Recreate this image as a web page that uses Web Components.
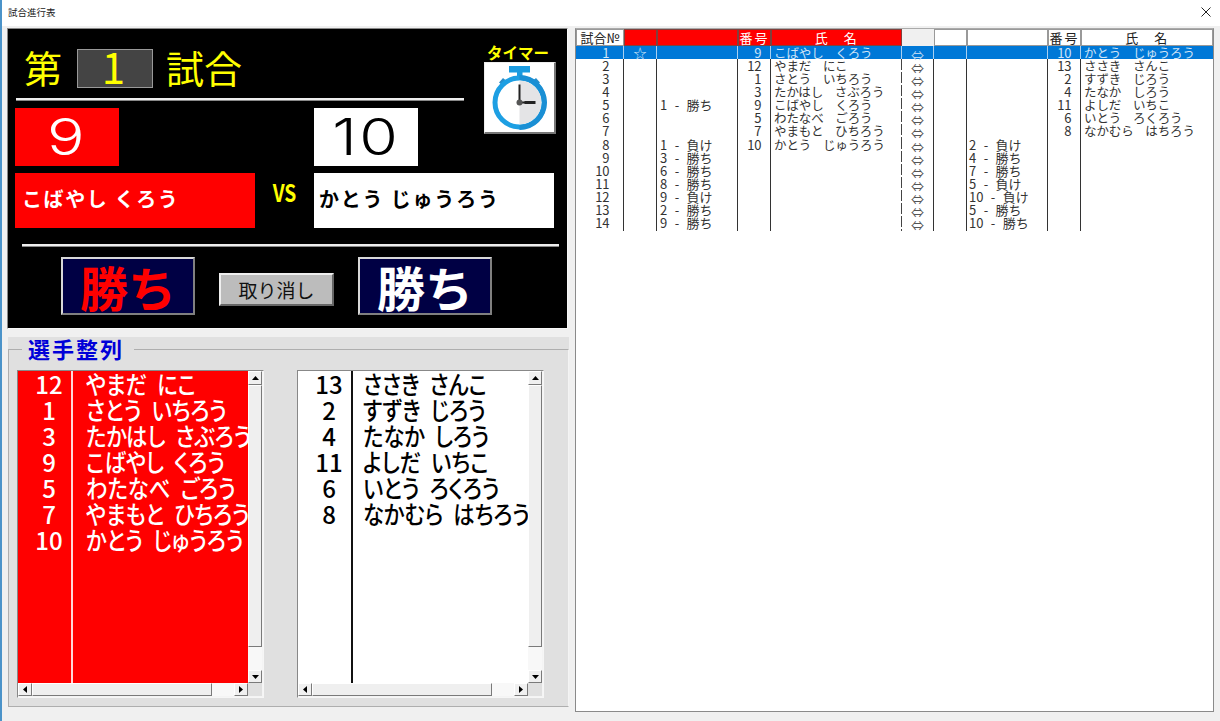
<!DOCTYPE html>
<html lang="ja"><head><meta charset="utf-8"><title>試合進行表</title>
<style>
html,body{margin:0;padding:0;background:#f0f0f0}
body{font-family:"Noto Sans CJK JP","Noto Sans",sans-serif;width:1220px;height:721px;overflow:hidden}
</style></head><body>
<app-window>
  <span slot="title">試合進行表</span>
  <score-board slot="left"></score-board>
  <sort-panel slot="left" heading="選手整列">
    <scroll-list tone="red" rows="12|やまだ にこ;1|さとう いちろう;3|たかはし さぶろう;9|こばやし くろう;5|わたなべ ごろう;7|やまもと ひちろう;10|かとう じゅうろう"></scroll-list>
    <scroll-list tone="white" rows="13|ささき さんこ;2|すずき じろう;4|たなか しろう;11|よしだ いちこ;6|いとう ろくろう;8|なかむら はちろう"></scroll-list>
  </sort-panel>
  <match-grid slot="right"></match-grid>
</app-window>
<script>
const JP='"Noto Sans CJK JP","Noto Sans",sans-serif';
function def(name,css,html){
  customElements.define(name,class extends HTMLElement{
    constructor(){super();const r=this.attachShadow({mode:'open'});r.innerHTML=`<style>${css}</style>${typeof html==='function'?html(this):html}`;}
    connectedCallback(){
      if(typeof html==='function'){ this.shadowRoot.innerHTML=`<style>${css}</style>${html(this)}`; }
    }
  });
}
def('app-window',`
:host{display:flex;flex-direction:column;width:1220px;height:721px;box-sizing:border-box;border-left:2px solid #4b93c9;background:#f0f0f0;font-family:${JP}}
.bar{flex:none;height:26px;background:#fff;display:flex;align-items:center;justify-content:space-between;padding:0 9px 2px 6px;box-sizing:border-box;font-size:9.5px;color:#222}
.bar svg{display:block}
.main{display:flex;flex:1;min-height:0;padding:2px 6px 0 5px;gap:6px;align-items:flex-start}
.left{display:flex;flex-direction:column;gap:8px;width:562px;flex:none}
`,`<div class="bar"><slot name="title"></slot><svg width="10" height="10" viewBox="0 0 10 10"><path d="M.5.5l9 9M9.5.5l-9 9" stroke="#222" stroke-width="1" fill="none"/></svg></div>
<div class="main"><div class="left"><slot name="left"></slot></div><slot name="right"></slot></div>`);

def('win-button',`
:host{display:flex;align-items:center;justify-content:center;box-sizing:border-box;width:134px;height:58px;background:#000044;border:2px solid;border-color:#d8d8d8 #808080 #808080 #d8d8d8;font-weight:700;font-size:48px;line-height:1;color:var(--fg,#fff);letter-spacing:0}
:host([plain]){width:115px;height:33px;background:#bcbcbc;border-color:#efefef #666 #666 #efefef;font-weight:400;font-size:19px;color:#111;margin-top:16px}
`,`<slot></slot>`);

def('stop-watch',`
:host{display:block;box-sizing:border-box;width:72px;height:72px;background:#fff;border:1px solid #eee;border-right:2px solid #777;border-bottom:2px solid #777}
svg{display:block}
`,`<svg width="69" height="69" viewBox="0 0 69 69">
<rect x="24" y="3" width="21" height="6.5" fill="#1a9be0"/><rect x="32" y="9" width="5.5" height="6" fill="#1a9be0"/>
<path d="M14 19.5l4-4.5 6 5-4 4.5zM55 19.5l-4-4.5-6 5 4 4.5z" fill="#2b8ec9"/>
<g transform="translate(-.5 -1.5)">
<circle cx="35" cy="41" r="24.5" fill="#fff" stroke="#1d9fe3" stroke-width="5"/>
<path d="M35 19a22 22 0 0 1 0 44z" fill="#e4e4e6"/>
<path d="M35 13.5a27 27 0 0 1 0 55v-5a22 22 0 0 0 0-45z" fill="#1a8fd4"/>
<path d="M35 23v18h15" fill="none" stroke="#222" stroke-width="2"/>
<path d="M40 41h11" fill="none" stroke="#222" stroke-width="3"/>
<circle cx="35" cy="41" r="3" fill="#555"/></g></svg>`);

def('score-board',`
:host{display:block;box-sizing:border-box;width:561px;height:301px;background:#000;border:1px solid;border-color:#888 #f8f8f8 #f8f8f8 #888;color:#fff}
.top{display:flex;height:144px}
.tl{width:476px;flex:none}
.title{display:flex;align-items:center;height:39px;margin:20px 0 0 16px;color:#ff0;font-size:38px;line-height:1;gap:15px}
.title span{padding-bottom:4px}
.title span:last-child{margin-left:-2px}
.title b{display:flex;align-items:center;justify-content:center;box-sizing:border-box;width:76px;height:39px;background:#444;border:1px solid #999;font-weight:400;font-size:42px;padding:0 3px 5px 0}
.rule{height:3px;background:#eee;border-bottom:1px solid #888;box-sizing:border-box}
.r1{width:448px;margin:10px 0 0 8px}
.nums{display:flex;gap:195px;margin:7px 0 0 7px}
.num{width:104px;height:58px;display:flex;align-items:center;justify-content:center;font-family:Inter,"Liberation Sans",sans-serif;font-weight:300;font-size:50px;line-height:1}
.num span{display:inline-block;transform:scaleX(1.25);letter-spacing:2px}
.red{background:#f00;color:#fff}.wht{background:#fff;color:#000}
.timer{display:flex;flex-direction:column;margin:13px 0 0 0;align-items:flex-start}
.timer span{color:#ff0;font-weight:700;font-size:15.5px;line-height:20px;margin-left:3px;white-space:nowrap}
.names{display:flex;align-items:center;margin:0 0 0 7px}
.name{width:240px;height:55px;display:flex;align-items:center;box-sizing:border-box;padding:0 0 4px 7px;font-weight:700;font-size:20px;letter-spacing:1.6px;white-space:nowrap}
.vs{width:59px;text-align:center;color:#ff0;font-weight:700;font-size:24px;line-height:1;margin-top:-17px;transform:scaleX(.8)}
.r2{width:537px;margin:16px 0 0 14px}
.btns{display:flex;align-items:flex-start;margin:10px 0 0 53px;gap:24px}
`,`<div class="top"><div class="tl">
<div class="title"><span>第</span><b>1</b><span>試合</span></div>
<div class="rule r1"></div>
<div class="nums"><div class="num red"><span>9</span></div><div class="num wht"><span>10</span></div></div>
</div><div class="timer"><span>タイマー</span><stop-watch></stop-watch></div></div>
<div class="names"><div class="name red">こばやし くろう</div><div class="vs">VS</div><div class="name wht" style="padding-left:5px;letter-spacing:1.8px">かとう じゅうろう</div></div>
<div class="rule r2"></div>
<div class="btns"><win-button style="--fg:#f00">勝ち</win-button><win-button plain>取り消し</win-button><win-button>勝ち</win-button></div>`);

def('sort-panel',`
:host{display:block;box-sizing:border-box;width:561px;height:370px;margin-left:1px;background:#e0e0e0}
fieldset{margin:0;padding:9px 0 0 8px;height:100%;box-sizing:border-box;border:1px solid #aeaeae;border-right-color:#f4f4f4;display:block}
legend{margin-left:5px;padding:0 10px 2px 6px;color:#0000d8;font-weight:700;font-size:22px;line-height:22px;letter-spacing:2px;white-space:nowrap}
.lists{display:flex;gap:33px}
`,s=>`<fieldset><legend>${s.getAttribute('heading')||''}</legend><div class="lists"><slot></slot></div></fieldset>`);

def('win-arrow',`
:host{display:flex;align-items:center;justify-content:center;box-sizing:border-box;width:14px;height:14px;background:#f0f0f0;border:1px solid;border-color:#fff #7a7a7a #7a7a7a #fff;flex:none}
svg{display:block}
`,s=>{const k=s.getAttribute('dir')||'u';const d={u:'M0 4L3.5 0 7 4z',d:'M0 0L7 0 3.5 4z',l:'M4 0V7L0 3.5z',r:'M0 0V7L4 3.5z'}[k];const v='ud'.includes(k);return `<svg width="${v?7:4}" height="${v?4:7}" viewBox="0 0 ${v?7:4} ${v?4:7}"><path d="${d}" fill="#000"/></svg>`});

def('win-scroll',`
:host{display:flex;background:#f8f8f8;box-sizing:border-box}
:host([v]){flex-direction:column;width:14px;height:312px}
:host([h]){flex-direction:row;width:230px;height:13px}
.thumb{background:#efefef;box-sizing:border-box;border:1px solid;border-color:#fff #7a7a7a #7a7a7a #fff}
:host([v]) .thumb{height:262px}
:host([h]) .thumb{width:180px}
.sp{flex:1}
:host([h]) win-arrow{height:13px}
`,s=>s.hasAttribute('v')?`<win-arrow dir="u"></win-arrow><div class="thumb"></div><div class="sp"></div><win-arrow dir="d" style="height:13px"></win-arrow>`:`<win-arrow dir="l"></win-arrow><div class="thumb"></div><div class="sp"></div><win-arrow dir="r"></win-arrow>`);

def('scroll-list',`
:host{display:block;box-sizing:border-box;width:247px;height:328px;background:#f4f4f4;border:1px solid;border-color:#888 #f6f6f6 #f6f6f6 #888;--bg:#fff;--fg:#000;--div:#111;--pad:10px}
:host([tone=red]){--bg:#f00;--fg:#fff;--div:#ffd8d8;--pad:13px}
.g{display:grid;grid-template-columns:230px 14px;grid-template-rows:312px 13px}
.c{background:var(--bg);color:var(--fg);overflow:hidden}
.r{display:grid;grid-template-columns:53px 2px 1fr;height:26px;line-height:25px;font-size:24px;white-space:nowrap}
.n{text-align:center;font-weight:500;padding-left:9px;box-sizing:border-box}
.d{background:var(--div);height:26px}
.t{padding-left:var(--pad);overflow:hidden;height:26px}
.t span{display:inline-block;transform:scaleX(.87);transform-origin:0 50%;font-weight:500;font-feature-settings:"palt";font-size:24.5px;word-spacing:6px}
.corner{background:#e0e0e0}
`,s=>{const rows=(s.getAttribute('rows')||'').split(';').map(x=>x.split('|'));
 while(rows.length<12)rows.push(['','']);
 return `<div class="g"><div class="c">${rows.map(([n,t])=>`<div class="r"><div class="n">${n}</div><div class="d"></div><div class="t"><span>${t}</span></div></div>`).join('')}</div><win-scroll v></win-scroll><win-scroll h></win-scroll><div class="corner"></div></div>`});

const T='48px 33px 81px 33px 131px 32px 33px 81px 33px 1fr';
const D=[
['1','☆','','9','こばやし くろう','','','10','かとう じゅうろう'],
['2','','','12','やまだ にこ','','','13','ささき さんこ'],
['3','','','1','さとう いちろう','','','2','すずき じろう'],
['4','','','3','たかはし さぶろう','','','4','たなか しろう'],
['5','','1 - 勝ち','9','こばやし くろう','','','11','よしだ いちこ'],
['6','','','5','わたなべ ごろう','','','6','いとう ろくろう'],
['7','','','7','やまもと ひちろう','','','8','なかむら はちろう'],
['8','','1 - 負け','10','かとう じゅうろう','','2 - 負け','',''],
['9','','3 - 勝ち','','','','4 - 勝ち','',''],
['10','','6 - 勝ち','','','','7 - 勝ち','',''],
['11','','8 - 勝ち','','','','5 - 負け','',''],
['12','','9 - 負け','','','','10 - 負け','',''],
['13','','2 - 勝ち','','','','5 - 勝ち','',''],
['14','','9 - 勝ち','','','','10 - 勝ち','','']];
def('match-grid',`
:host{display:block;box-sizing:border-box;width:639px;height:684px;background:#fff;border:1px solid #8a8a8a;border-top-color:#aaa;font-size:13px;color:#333}
.h,.r{display:grid;grid-template-columns:${T}}
.h{height:17px;line-height:15px;text-align:center;background:#f0f0f0;color:#222}
.h>div{box-sizing:border-box;border:1px solid #999;background:#fff;white-space:pre}
.h>.red{background:#f00;color:#fff;border-color:#80403c}
.h>.gap{background:#f0f0f0;border:0}
.h>.ls{letter-spacing:2px}
.h>.ws{letter-spacing:1.5px}
.r{height:13.08px;line-height:13px;white-space:nowrap}
.r>div{box-sizing:border-box;border-right:1px solid #333}
.r>.dash{border-right:0;background:repeating-linear-gradient(to bottom,#444 0 11px,transparent 11px 13.08px) right/1px 100% no-repeat}
.r>:last-child{border-right:0}
.no{text-align:right;padding-right:14px;letter-spacing:-.4px}
.num{text-align:right;padding-right:9px;letter-spacing:-.4px}
.res{padding-left:3px;word-spacing:4.5px;font-size:13px}
.res.r2{padding-left:2px}
.nm{padding-left:3px;font-size:12.5px;letter-spacing:-.1px;word-spacing:9px}
.ar{text-align:center;color:#555;padding-top:2px;font-size:13px}
.st{text-align:center}
.sel{background:#0078d7;color:#cfe3f6}
.sel>div{border-right-color:#a9cff0}
.sel>.ar{color:#b5d6f2}
.body{height:183.2px}
`,()=>`<div class="h"><div>試合№</div><div class="red"></div><div class="red"></div><div class="red ls">番号</div><div class="red ws">氏　名</div><div class="gap"></div><div></div><div></div><div class="ls">番号</div><div class="ws">氏　名</div></div>
<div class="body">${D.map((d,i)=>`<div class="r${i==0?' sel':''}"><div class="no">${d[0]}</div><div class="st">${d[1]}</div><div class="res">${d[2]}</div><div class="num">${d[3]}</div><div class="nm ${i?'dash':''}">${d[4]}</div><div class="ar">⇔</div><div></div><div class="res r2">${d[6]}</div><div class="num">${d[7]}</div><div class="nm">${d[8]}</div></div>`).join('')}</div>`);
</script>
</body></html>
